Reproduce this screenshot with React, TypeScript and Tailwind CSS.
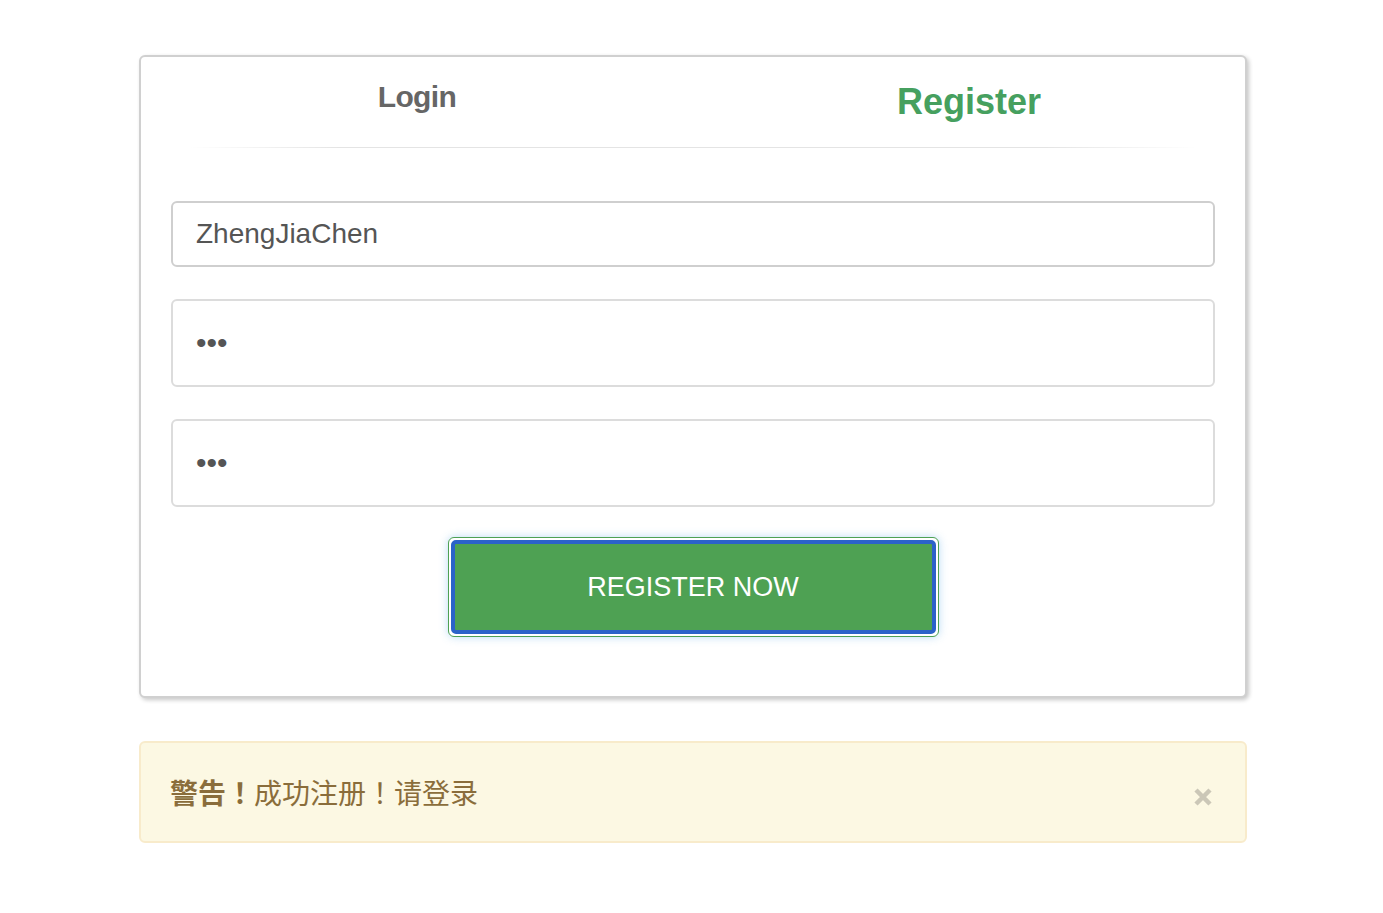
import React from 'react';

const sans = { fontFamily: '"Liberation Sans", Arial, sans-serif' };
const cjk = { fontFamily: '"Liberation Sans", "Noto Sans CJK SC", sans-serif' };
// fullwidth punctuation centred in its box, as on the reference
const bang = { fontFamily: '"Noto Sans CJK TC", "Noto Sans CJK SC", sans-serif' };

const App: React.FC = () => {
    return (
        <div className="min-h-screen bg-white pt-[55px]" style={sans}>
            {/* Card */}
            <div className="ml-[139px] w-[1108px] bg-white border-2 border-[#d0d0d0] rounded-[6px] shadow-[2px_2px_4px_rgba(0,0,0,0.22)] pb-[59px]">
                {/* Tabs */}
                <div className="grid grid-cols-2 h-[90px] items-start">
                    <div className="flex justify-center pt-[25px]">
                        <span className="text-[30px] leading-none font-bold text-[#666666] tracking-[-0.6px]">Login</span>
                    </div>
                    <div className="flex justify-center pt-[27px]">
                        <span className="text-[36px] leading-none font-bold text-[#46a05f]">Register</span>
                    </div>
                </div>
                <div className="mx-[48px] h-px bg-[linear-gradient(to_right,transparent,#e4e4e4_15%,#e4e4e4_85%,transparent)]" />

                {/* Form */}
                <div className="px-[30px] pt-[53px] flex flex-col gap-[32px]">
                    <input
                        readOnly
                        value="ZhengJiaChen"
                        className="h-[66px] w-full border-2 border-[#cfcfcf] rounded-[6px] pl-[23px] text-[28px] text-[#555555] outline-none"
                        style={sans}
                    />
                    <input
                        readOnly
                        type="password"
                        value="abc"
                        className="h-[88px] w-full border-2 border-[#dcdcdc] rounded-[6px] pl-[23px] text-[30px] text-[#555555] outline-none"
                        style={sans}
                    />
                    <input
                        readOnly
                        type="password"
                        value="abc"
                        className="h-[88px] w-full border-2 border-[#dcdcdc] rounded-[6px] pl-[23px] text-[30px] text-[#555555] outline-none"
                        style={sans}
                    />
                </div>

                {/* Button */}
                <div className="flex justify-center mt-[30px]">
                    <div className="w-[491px] h-[100px] border border-[#4ea153] rounded-[6px] bg-white p-[2px] shadow-[0_0_8px_rgba(102,175,233,0.45)]">
                        <button
                            className="w-full h-full bg-[#4ea153] border-[4px] border-[#2b62c9] rounded-[5px] text-white text-[27px] leading-none"
                            style={sans}
                        >
                            REGISTER NOW
                        </button>
                    </div>
                </div>
            </div>

            {/* Alert */}
            <div className="ml-[139px] mt-[43px] w-[1108px] h-[102px] bg-[#fcf8e3] border-2 border-[#f8ebcb] rounded-[6px] flex items-center pl-[29px] pr-[32px] text-[#8a6d3b]" style={cjk}>
                <span className="text-[28px] leading-none pt-[2px]">
                    <span className="font-bold">警告<span style={bang}>！</span></span>成功注册<span style={bang}>！</span>请登录
                </span>
                <svg className="ml-auto mt-[10px]" width="20" height="20" viewBox="0 0 20 20">
                    <path d="M3 3 L17 17 M17 3 L3 17" stroke="#cbc7b7" strokeWidth="4.5" strokeLinecap="butt" />
                </svg>
            </div>
        </div>
    );
};

export default App;
